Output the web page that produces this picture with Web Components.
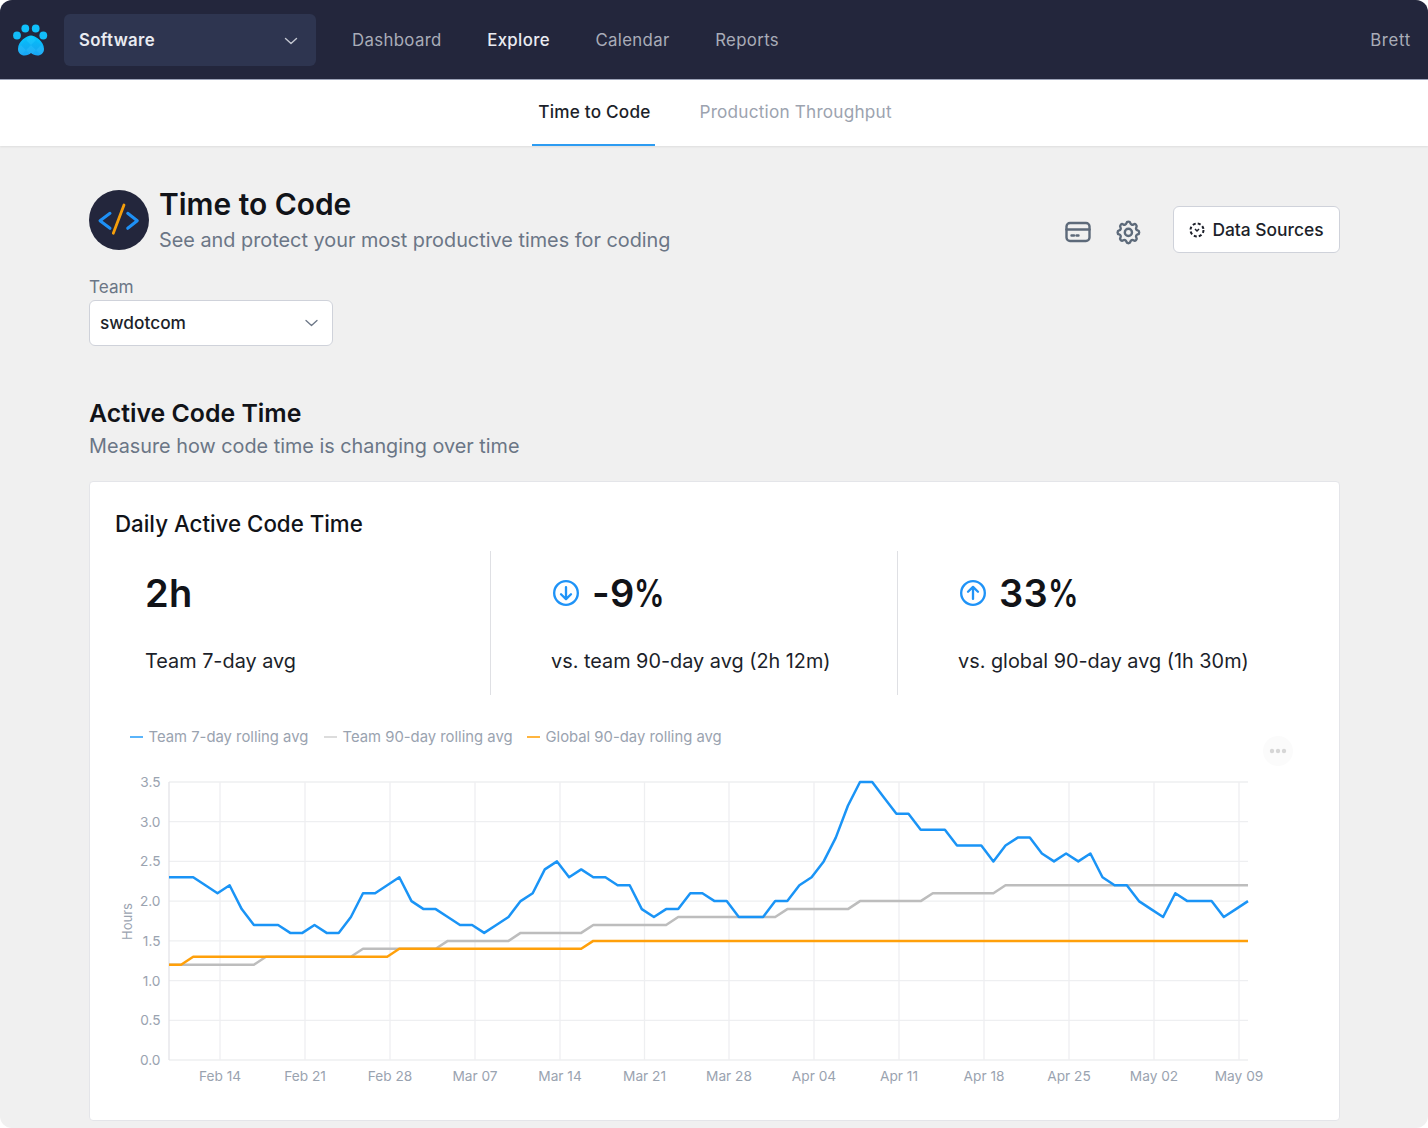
<!doctype html>
<html><head><meta charset="utf-8">
<style>
html,body{margin:0;padding:0;background:#fff}
body{width:1428px;height:1128px;overflow:hidden;font-family:Inter,"Liberation Sans",sans-serif}
</style></head><body>
<app-frame>
  <top-bar slot="top"></top-bar>
  <sub-tabs slot="top"></sub-tabs>
  <page-head></page-head>
  <team-select></team-select>
  <section-head></section-head>
  <code-card>
    <stat-cell value="2h" label="Team 7-day avg"></stat-cell>
    <stat-cell value="-9" unit="%" label="vs. team 90-day avg (2h 12m)" dir="down"></stat-cell>
    <stat-cell value="33" unit="%" label="vs. global 90-day avg (1h 30m)" dir="up"></stat-cell>
    <line-chart slot="chart"></line-chart>
  </code-card>
</app-frame>
<script>
function def(name,html){
  class C extends HTMLElement{
    constructor(){super();this.attachShadow({mode:'open'});}
    connectedCallback(){this.shadowRoot.innerHTML=typeof html==='function'?html(this):html;}
  }
  customElements.define(name,C);
}
def('app-frame',`<style>
:host{display:block;width:1428px;height:1128px;background:#f0f0f0;border-radius:12px;overflow:hidden}
.main{padding:0 88px 0 89px}
</style><slot name="top"></slot><div class="main"><slot></slot></div>`);

def('top-bar',`<style>
:host{display:flex;align-items:center;height:80px;background:#23263c;box-sizing:border-box;color:#fff;font-size:16.8px;letter-spacing:.35px;border-bottom:1px solid #9da3b8}
.paw{width:36px;height:34px;margin-left:13px;flex:none;display:block}
.sw{width:252px;height:52px;background:#2e3550;border-radius:6px;margin-left:15px;display:flex;align-items:center;justify-content:space-between;padding:0 18px 0 15px;box-sizing:border-box;font-weight:600;color:#e9ebf1;flex:none}
.sw svg{margin-top:2px}
nav{display:flex;margin-left:36px;gap:45.5px}
a{color:#a9acb8;font-weight:400}
a.on{color:#e9ebf1;font-weight:500}
.me{margin-left:auto;margin-right:17px;color:#a9acb8;letter-spacing:.7px}
</style>
<svg class="paw" viewBox="0 0 36 34">
<defs><linearGradient id="g" x1="0" y1="0" x2="0" y2="1"><stop offset="0" stop-color="#00cbff"/><stop offset="1" stop-color="#1ba3f4"/></linearGradient>
<clipPath id="c"><path d="M18 12.500C14 12.500 5 18 5 26c0 4 3 6.500 6.500 6.500 2.500 0 5-1 6.500-2.500 1.500 1.500 4 2.500 6.500 2.500C28 32.500 31 30 31 26c0-8-9-13.500-13-13.500Z"/></clipPath></defs>
<circle cx="4" cy="12.500" r="3.900" fill="#12bcf8"/><circle cx="12.300" cy="5.500" r="3.900" fill="#0fc0fb"/><circle cx="22.700" cy="5.500" r="3.900" fill="#0fc0fb"/><circle cx="30.300" cy="12.500" r="3.900" fill="#12bcf8"/>
<g clip-path="url(#c)"><rect x="0" y="10" width="36" height="24" fill="url(#g)"/>
<path d="M18 12l5 5-5 5-5-5ZM8 22l5 5-5 5-5-5ZM28 22l5 5-5 5-5-5ZM18 22l5 5-5 5-5-5Z" fill="#fff" opacity=".05"/>
<path d="M13 17l5 5-5 5-5-5ZM23 17l5 5-5 5-5-5Z" fill="#0a5fb0" opacity=".05"/></g>
</svg>
<div class="sw"><span>Software</span><svg width="14" height="8" viewBox="0 0 14 8" fill="none" stroke="#c4c7d1" stroke-width="1.400" stroke-linecap="round" stroke-linejoin="round"><path d="M1.500 1.500 7 6.500l5.500-5"/></svg></div>
<nav><a>Dashboard</a><a class="on">Explore</a><a>Calendar</a><a>Reports</a></nav>
<span class="me">Brett</span>`);

def('sub-tabs',`<style>
:host{display:flex;justify-content:center;height:66px;background:#fff;box-shadow:0 1px 2px rgba(0,0,0,.08);font-size:17.200px;letter-spacing:.2px;box-sizing:border-box;padding-right:4px}
div{display:flex;align-items:center;height:66px;box-sizing:border-box;margin:0}
.on{color:#1c1f2a;font-weight:500;border-bottom:2px solid #2d9cf2;margin-right:40px;padding:0 4px 2px 6px}
.off{color:#9ca3af;border-bottom:2px solid transparent;padding:0 0 2px 5px}
</style><div class="on">Time to Code</div><div class="off">Production Throughput</div>`);

def('page-head',`<style>
:host{display:flex;align-items:flex-start;padding-top:44px;height:83px}
.logo{width:60px;height:60px;flex:none}
.t{margin-left:10px}
h1{margin:-1px 0 0;font-size:29.900px;line-height:30px;font-weight:600;color:#111318}
p{margin:9px 0 0;font-size:19.850px;line-height:24px;color:#6b7686}
.r{margin-left:auto;display:flex;align-items:center;margin-top:21px}
.ic{display:block}
.card{margin-left:-1px}
button{all:unset;box-sizing:border-box;width:167px;height:47px;background:#fff;border:1px solid #cfd2da;border-radius:6px;display:flex;align-items:center;justify-content:center;gap:7px;font-size:17.400px;font-weight:500;color:#1c1f2a;margin-left:30.600px;margin-top:-5px}
</style>
<svg class="logo" viewBox="0 0 60 60"><circle cx="30" cy="30" r="30" fill="#23263c"/>
<path d="M21 23.300 11 30.700l10 7.600M38.700 23.300l9.600 7.400-9.600 7.600" fill="none" stroke="#1e90f5" stroke-width="3" stroke-linecap="round" stroke-linejoin="round"/>
<path d="M35 15 24.300 43.300" fill="none" stroke="#f59e0b" stroke-width="2.800" stroke-linecap="round"/></svg>
<div class="t"><h1>Time to Code</h1><p>See and protect your most productive times for coding</p></div>
<div class="r">
<svg class="ic card" width="26" height="24" viewBox="0 0 26 24" fill="none" stroke="#5d6a7a" stroke-width="2.400" stroke-linecap="round" stroke-linejoin="round"><rect x="1.500" y="3" width="23" height="18" rx="3.500"/><path d="M1.500 9.500h23"/><path d="M6.500 15.500h2.500M11.500 15.500h2"/></svg>
<svg class="ic" style="margin-left:22.600px" width="28.800" height="28.800" viewBox="0 0 24 24" fill="none" stroke="#5d6a7a" stroke-width="2" stroke-linecap="round" stroke-linejoin="round"><path d="M10.325 4.317c.426-1.756 2.924-1.756 3.35 0a1.724 1.724 0 002.573 1.066c1.543-.94 3.31.826 2.37 2.37a1.724 1.724 0 001.065 2.572c1.756.426 1.756 2.924 0 3.35a1.724 1.724 0 00-1.066 2.573c.94 1.543-.826 3.31-2.37 2.37a1.724 1.724 0 00-2.572 1.065c-.426 1.756-2.924 1.756-3.35 0a1.724 1.724 0 00-2.573-1.066c-1.543.94-3.31-.826-2.37-2.37a1.724 1.724 0 00-1.065-2.572c-1.756-.426-1.756-2.924 0-3.35a1.724 1.724 0 001.066-2.573c-.94-1.543.826-3.31 2.37-2.37.996.608 2.296.07 2.572-1.065z"/><circle cx="12" cy="12" r="3"/></svg>
<button><svg width="16" height="16" viewBox="0 0 16 16" fill="none" stroke="#1c1f2a" stroke-width="2"><circle cx="8" cy="8" r="6.500" stroke-dasharray="3 2.100"/><path d="M6 7l2 2 2-2" stroke-width="1.500"/></svg>Data Sources</button>
</div>`);

def('team-select',`<style>
:host{display:block;width:244px}
label{display:block;font-size:17.200px;line-height:20px;color:#6b7686;margin-top:4px}
.b{box-sizing:border-box;margin-top:3px;height:46px;background:#fff;border:1px solid #cfd2da;border-radius:6px;display:flex;align-items:center;justify-content:space-between;padding:0 14px 0 10px;font-size:17.300px;font-weight:500;color:#1c1f2a}
.b span{margin-top:-2px}
</style><label>Team</label><div class="b"><span>swdotcom</span><svg width="13" height="8" viewBox="0 0 13 8" fill="none" stroke="#6b7686" stroke-width="1.300" stroke-linecap="round" stroke-linejoin="round"><path d="M1 1.500l5.500 5 5.500-5"/></svg></div>`);

def('section-head',`<style>
:host{display:block;padding-top:52px}
h2{margin:0;font-size:24.850px;line-height:30px;font-weight:600;color:#111318}
p{margin:6px 0 0;font-size:19.820px;line-height:24px;color:#6b7686}
</style><h2>Active Code Time</h2><p>Measure how code time is changing over time</p>`);

def('code-card',`<style>
:host{display:block;box-sizing:border-box;height:640px;margin-top:23px;background:#fff;border:1px solid #e4e5e9;border-radius:4px}
h3{margin:0;padding:29px 0 0 25px;font-size:22.300px;line-height:26px;font-weight:500;color:#111318}
.stats{display:grid;grid-template-columns:400px 407px 1fr;margin-top:14px;height:144px}
</style><h3>Daily Active Code Time</h3><div class="stats"><slot></slot></div><slot name="chart"></slot>`);

const ARROW={down:'M9 5.200v7.600M5.800 9.800 9 12.900l3.200-3.100',up:'M9 12.800V5.200M5.800 8.200 9 5.100l3.200 3.100'};
def('stat-cell',el=>{
  const d=el.getAttribute('dir'),u=el.getAttribute('unit');
  return `<style>
:host{display:block;box-sizing:border-box;padding:0 0 0 60px;border-left:1px solid #dfe0e4}
:host(:first-child){border-left:0;padding-left:55px}
.v{display:flex;align-items:center;height:46px;margin-top:19px;gap:12px;font-size:38px;font-weight:600;color:#111318;letter-spacing:.2px}
svg{margin-left:1px;flex:none}
i{font-style:normal;display:inline-block;transform:scaleX(.8);transform-origin:0 50%;margin-right:-8px}
.l{margin-top:32px;font-size:19.850px;line-height:26px;color:#1c1f2a;white-space:nowrap}
</style><div class="v">${d?`<svg width="28" height="28" viewBox="0 0 18 18" fill="none" stroke="#1f93f7" stroke-width="1.500" stroke-linecap="round" stroke-linejoin="round"><circle cx="9" cy="9" r="7.600"/><path d="${ARROW[d]}"/></svg>`:''}<span>${el.getAttribute('value')}${u?`<i>${u}</i>`:''}</span></div><div class="l">${el.getAttribute('label')}</div>`;
});

(function(){
 const blue=[2.3,2.3,2.3,2.2,2.1,2.2,1.9,1.7,1.7,1.7,1.6,1.6,1.7,1.6,1.6,1.8,2.1,2.1,2.2,2.3,2.0,1.9,1.9,1.8,1.7,1.7,1.6,1.7,1.8,2.0,2.1,2.4,2.5,2.3,2.4,2.3,2.3,2.2,2.2,1.9,1.8,1.9,1.9,2.1,2.1,2.0,2.0,1.8,1.8,1.8,2.0,2.0,2.2,2.3,2.5,2.8,3.2,3.5,3.5,3.3,3.1,3.1,2.9,2.9,2.9,2.7,2.7,2.7,2.5,2.7,2.8,2.8,2.6,2.5,2.6,2.5,2.6,2.3,2.2,2.2,2.0,1.9,1.8,2.1,2.0,2.0,2.0,1.8,1.9,2.0];
 const steps=(a)=>{const o=[];for(const [v,n] of a)for(let i=0;i<n;i++)o.push(v);return o;};
 const gray=steps([[1.2,8],[1.3,8],[1.4,7],[1.5,6],[1.6,6],[1.7,7],[1.8,9],[1.9,6],[2.0,6],[2.1,6],[2.2,21]]);
 const orange=steps([[1.2,2],[1.3,17],[1.4,16],[1.5,55]]);
 const X=i=>169+i*1079/89, Y=v=>1060-v*278/3.5;
 const pts=a=>a.map((v,i)=>X(i).toFixed(1)+','+Y(v).toFixed(1)).join(' ');
 const months=['Feb 14','Feb 21','Feb 28','Mar 07','Mar 14','Mar 21','Mar 28','Apr 04','Apr 11','Apr 18','Apr 25','May 02','May 09'];
 const tx=[220,305,390,475,560,644.500,729,814,899,984,1069,1154,1239];
 let s='';
 for(let i=0;i<=7;i++){const v=i*.5,y=Y(v);
   s+=`<path d="M169 ${y}H1248" stroke="#eeeff1" stroke-width="1.300"/>`;
   s+=`<text x="160.500" y="${y+5}" text-anchor="end" class="ax">${v.toFixed(1)}</text>`;}
 tx.forEach((x,i)=>{s+=`<path d="M${x} 782V1060" stroke="#eeeff1" stroke-width="1.300"/><text x="${x}" y="1081" text-anchor="middle" class="ax">${months[i]}</text>`;});
 s+=`<path d="M169 782V1060" stroke="#e3e4e8" stroke-width="1.300"/>`;
 s+=`<text transform="translate(132 921.500) rotate(-90)" text-anchor="middle" class="ax" style="font-size:13px">Hours</text>`;
 s+=`<polyline points="${pts(gray)}" fill="none" stroke="#bdbdbd" stroke-width="2.500" stroke-linejoin="round"/>`;
 s+=`<polyline points="${pts(blue)}" fill="none" stroke="#1a94f6" stroke-width="2.500" stroke-linejoin="round"/>`;
 s+=`<polyline points="${pts(orange)}" fill="none" stroke="#ffa00a" stroke-width="2.500" stroke-linejoin="round"/>`;
 const leg=[[130,'#5ab4fa','Team 7-day rolling avg',148.500],[324,'#dcdcdc','Team 90-day rolling avg',342.500],[527,'#ffb53f','Global 90-day rolling avg',545.500]];
 leg.forEach(l=>{s+=`<path d="M${l[0]} 737h13" stroke="${l[1]}" stroke-width="2"/><text x="${l[3]}" y="742" class="lg">${l[2]}</text>`;});
 s+=`<circle cx="1278" cy="751" r="15" fill="#fbfbfb"/><circle cx="1272" cy="751" r="2.200" fill="#d6d6d6"/><circle cx="1278" cy="751" r="2.200" fill="#d6d6d6"/><circle cx="1284" cy="751" r="2.200" fill="#d6d6d6"/>`;
 def('line-chart',`<style>
 :host{display:block;height:400px;margin:25px 0 0 -1px}
 svg{display:block;overflow:visible}
 text{font-family:Inter,"Liberation Sans",sans-serif}
 .ax{font-size:13.700px;fill:#9aa3b0}
 .lg{font-size:14.830px;fill:#9aa3b0}
 </style><svg width="1250" height="400" viewBox="89 720 1250 400">${s}</svg>`);
})();
</script>
</body></html>
